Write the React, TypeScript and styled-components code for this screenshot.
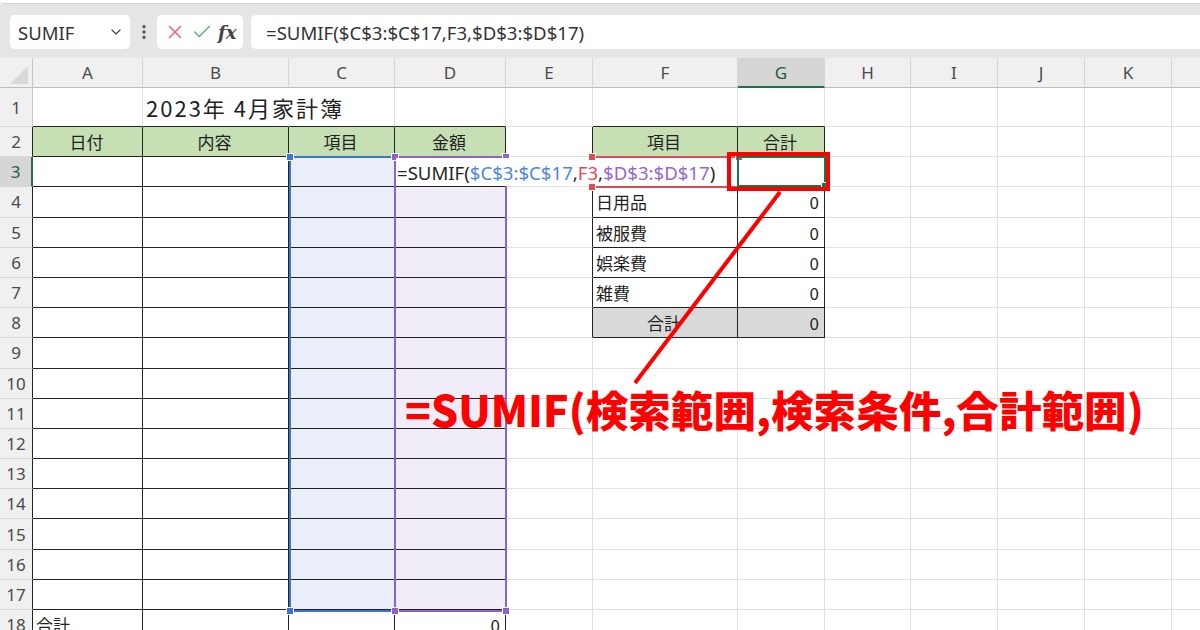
import React from 'react';
import styled, { createGlobalStyle } from 'styled-components';
import { ChevronDown, EllipsisVertical, X, Check } from 'lucide-react';

const GlobalStyle = createGlobalStyle`
  html, body { margin: 0; padding: 0; background: #ffffff; }
  body { font-family: "Noto Sans CJK JP", "Noto Sans", sans-serif; }
`;

const COL_NAMES = ['A', 'B', 'C', 'D', 'E', 'F', 'G', 'H', 'I', 'J', 'K', 'L'];
const COL_WIDTHS = [110, 146, 106, 111, 87, 145, 87, 86, 87, 87, 87, 87];
const ROWS = Array.from({ length: 18 }, (_, i) => i + 1);
const ROW_H = 30.2;

const GRID_LINE = '#e1e1e1';
const INK = '#222222';
const HEADER_GREEN = '#c6e0b4';
const EXCEL_GREEN = '#217346';
const BLUE = '#3f74d2';
const PURPLE = '#8d62c9';
const REF_RED = '#dc4d57';

// grid lines: 1 = row header column, 2 = A ...; 1 = header row, 2 = sheet row 1 ...
const colLine = (name: string) => COL_NAMES.indexOf(name) + 2;
const rowLine = (r: number) => r + 1;

type Align = 'left' | 'center' | 'right';

interface CellDef {
  text?: string;
  align?: Align;
  size?: number;
  spacing?: number;
  open?: boolean;
}

const cellDefs: Record<string, CellDef> = {
  B1: { text: '2023年 4月家計簿', size: 22, spacing: 2, open: true },
  A2: { text: '日付', align: 'center' },
  B2: { text: '内容', align: 'center' },
  C2: { text: '項目', align: 'center' },
  D2: { text: '金額', align: 'center' },
  F2: { text: '項目', align: 'center' },
  G2: { text: '合計', align: 'center' },
  F4: { text: '日用品' },
  G4: { text: '0', align: 'right' },
  F5: { text: '被服費' },
  G5: { text: '0', align: 'right' },
  F6: { text: '娯楽費' },
  G6: { text: '0', align: 'right' },
  F7: { text: '雑費' },
  G7: { text: '0', align: 'right' },
  F8: { text: '合計', align: 'center' },
  G8: { text: '0', align: 'right' },
  A18: { text: '合計' },
  D18: { text: '0', align: 'right' },
};

const inTable1 = (r: number, c: number) => r >= 2 && r <= 17 && c <= 3;
const inTable2 = (r: number, c: number) => r >= 2 && r <= 8 && (c === 5 || c === 6);

const darkRight = (r: number, c: number) =>
  inTable1(r, c) || inTable2(r, c) || (r >= 2 && r <= 8 && c === 4) || (r === 18 && c <= 3);

const darkBottom = (r: number, c: number) =>
  inTable1(r, c) || inTable2(r, c) || (r === 1 && (c <= 3 || c === 5 || c === 6));

const fillFor = (r: number, c: number) => {
  if (r === 2 && (c <= 3 || c === 5 || c === 6)) return HEADER_GREEN;
  if (r === 8 && (c === 5 || c === 6)) return '#d9d9d9';
  if (r >= 3 && r <= 17 && c === 2) return '#e9eef8';
  if (r >= 3 && r <= 17 && c === 3) return '#f0edf8';
  return 'transparent';
};

const Page = styled.div`
  width: 1200px;
  height: 630px;
  overflow: hidden;
  background: #ffffff;
`;

const TopStrip = styled.div`
  height: 3px;
  background: #ffffff;
  border-bottom: 1px solid #d3d3d3;
  border-bottom-left-radius: 6px;
`;

const FormulaBar = styled.div`
  box-sizing: border-box;
  height: 54px;
  padding: 11px 0 9px 10px;
  display: flex;
  align-items: stretch;
  background: #e6e6e6;
`;

const NameBox = styled.div`
  width: 120px;
  box-sizing: border-box;
  padding: 0 6px 0 8px;
  display: flex;
  align-items: center;
  justify-content: space-between;
  background: #ffffff;
  border-radius: 5px;
  font: 18.5px "Noto Sans", sans-serif;
  color: #333333;
`;

const Kebab = styled.div`
  width: 27px;
  display: flex;
  align-items: center;
  justify-content: center;
  color: #555555;
`;

const ActionBox = styled.div`
  width: 86px;
  display: flex;
  align-items: center;
  justify-content: space-around;
  padding: 0 4px;
  box-sizing: border-box;
  background: #ffffff;
  border-radius: 5px;
`;

const Fx = styled.span`
  font: italic bold 18px "DejaVu Serif", serif;
  color: #444444;
`;

const FormulaInput = styled.div`
  flex: 1;
  margin-left: 8px;
  padding-left: 15px;
  display: flex;
  align-items: center;
  background: #ffffff;
  border-radius: 5px 0 0 5px;
  font: 18.6px "Noto Sans", sans-serif;
  color: #333333;
`;

const Sheet = styled.div`
  position: relative;
  display: grid;
  grid-template-columns: 33px ${COL_WIDTHS.map((w) => `${w}px`).join(' ')};
  grid-template-rows: 30px 39px repeat(17, ${ROW_H}px);
`;

const Corner = styled.div`
  grid-column: 1;
  grid-row: 1;
  box-sizing: border-box;
  background: #f0f0f0;
  border-right: 1px solid #c6c6c6;
  border-bottom: 1px solid #bdbdbd;
`;

const ColHead = styled.div<{ $col: number; $active?: boolean }>`
  grid-column: ${(p) => p.$col};
  grid-row: 1;
  box-sizing: border-box;
  display: flex;
  align-items: center;
  justify-content: center;
  background: ${(p) => (p.$active ? '#d6d6d6' : '#f0f0f0')};
  color: ${(p) => (p.$active ? '#1d5f3a' : '#4a4a4a')};
  border-right: 1px solid #d6d6d6;
  border-bottom: ${(p) => (p.$active ? `2px solid ${EXCEL_GREEN}` : '1px solid #bdbdbd')};
  font: 17px "Noto Sans", sans-serif;
`;

const RowHead = styled.div<{ $row: number; $active?: boolean; $edge?: boolean }>`
  grid-column: 1;
  grid-row: ${(p) => p.$row};
  box-sizing: border-box;
  display: flex;
  align-items: center;
  justify-content: center;
  background: ${(p) => (p.$active ? '#d6d6d6' : '#f0f0f0')};
  color: ${(p) => (p.$active ? '#1d5f3a' : '#4a4a4a')};
  border-bottom: 1px solid #d8d8d8;
  border-right: ${(p) =>
    p.$active ? `2px solid ${EXCEL_GREEN}` : p.$edge ? `1px solid ${INK}` : '1px solid #c6c6c6'};
  font: 17px "Noto Sans", sans-serif;
`;

const Cell = styled.div<{
  $col: number;
  $row: number;
  $align: Align;
  $fill: string;
  $rDark: boolean;
  $bDark: boolean;
  $open?: boolean;
  $size?: number;
  $spacing?: number;
}>`
  grid-column: ${(p) => p.$col};
  grid-row: ${(p) => p.$row};
  box-sizing: border-box;
  display: flex;
  align-items: center;
  justify-content: ${(p) =>
    p.$align === 'center' ? 'center' : p.$align === 'right' ? 'flex-end' : 'flex-start'};
  padding: 0 5px 0 3px;
  background: ${(p) => p.$fill};
  border-right: 1px solid ${(p) => (p.$rDark ? INK : p.$open ? 'transparent' : GRID_LINE)};
  border-bottom: 1px solid ${(p) => (p.$bDark ? INK : GRID_LINE)};
  font-size: ${(p) => p.$size ?? 17}px;
  letter-spacing: ${(p) => p.$spacing ?? 0}px;
  color: #1f1f1f;
  white-space: nowrap;
  overflow: visible;
`;

// overlays sit on the same grid, spanning the cells they mark
const RangeBox = styled.div<{ $color: string; $cols: string; $rows: string; $edges?: boolean }>`
  grid-column: ${(p) => p.$cols};
  grid-row: ${(p) => p.$rows};
  position: relative;
  z-index: 2;
  box-sizing: border-box;
  margin: -1px -1px -2px ${(p) => (p.$edges ? '0' : '-1px')};
  border: 2px solid ${(p) => p.$color};
`;

const RefBox = styled.div`
  grid-column: ${colLine('F')};
  grid-row: ${rowLine(3)};
  position: relative;
  z-index: 4;
  margin: -1px 0 -1px 0;
  border-top: 2px solid ${REF_RED};
  border-bottom: 2px solid ${REF_RED};
`;

const Handle = styled.span<{ $color: string; $v: 'top' | 'bottom'; $h: 'left' | 'right' }>`
  position: absolute;
  ${(p) => p.$v}: -4px;
  ${(p) => p.$h}: -4px;
  width: 6px;
  height: 6px;
  background: ${(p) => p.$color};
  outline: 1px solid #ffffff;
`;

const EditText = styled.div`
  grid-column: ${colLine('D')} / ${colLine('G')};
  grid-row: ${rowLine(3)};
  z-index: 3;
  margin: 1px 11px 1px 1px;
  display: flex;
  align-items: center;
  padding-left: 1px;
  background: #ffffff;
  font: 18.6px "Noto Sans", sans-serif;
  color: #262626;
  white-space: nowrap;
`;

const Ref = styled.span<{ $color: string }>`
  color: ${(p) => p.$color};
`;

const ActiveCell = styled.div`
  grid-column: ${colLine('G')};
  grid-row: ${rowLine(3)};
  position: relative;
  z-index: 5;
  margin: -1px -1px 0 -1px;
  border: 2px solid ${EXCEL_GREEN};
`;

const FillHandle = styled.span`
  position: absolute;
  right: -5px;
  bottom: -5px;
  width: 6px;
  height: 6px;
  background: ${EXCEL_GREEN};
  border: 1px solid #ffffff;
`;

const Callout = styled.div`
  grid-column: ${colLine('G')};
  grid-row: ${rowLine(3)};
  z-index: 6;
  margin: -5.5px -5px -3.5px -11px;
  border: 4.5px solid #ff0000;
`;

const Pointer = styled.svg`
  position: absolute;
  left: 0;
  top: 0;
  z-index: 6;
  pointer-events: none;
`;

const Annotation = styled.div`
  grid-column: ${colLine('D')} / -1;
  grid-row: ${rowLine(11)} / span 2;
  z-index: 6;
  margin: -11px 0 0 10px;
  font-family: "Noto Sans CJK JP", sans-serif;
  font-weight: 900;
  font-size: 42.6px;
  line-height: 1;
  color: #ff0000;
  white-space: nowrap;
`;

const corners: Array<['top' | 'bottom', 'left' | 'right']> = [
  ['top', 'left'],
  ['top', 'right'],
  ['bottom', 'left'],
  ['bottom', 'right'],
];

export default function App() {
  return (
    <>
      <GlobalStyle />
      <Page>
        <TopStrip />
        <FormulaBar>
          <NameBox>
            SUMIF
            <ChevronDown size={16} color="#444" strokeWidth={1.8} />
          </NameBox>
          <Kebab>
            <EllipsisVertical size={18} strokeWidth={2.4} />
          </Kebab>
          <ActionBox>
            <X size={22} color="#e06a6a" strokeWidth={1.6} />
            <Check size={22} color="#5cb27a" strokeWidth={1.6} />
            <Fx>fx</Fx>
          </ActionBox>
          <FormulaInput>=SUMIF($C$3:$C$17,F3,$D$3:$D$17)</FormulaInput>
        </FormulaBar>

        <Sheet>
          <Corner>
            <svg width="32" height="29" viewBox="0 0 32 29">
              <polygon points="28,8 28,26 10,26" fill="#d9d9d9" />
            </svg>
          </Corner>
          {COL_NAMES.map((name) => (
            <ColHead key={name} $col={colLine(name)} $active={name === 'G'}>
              {name}
            </ColHead>
          ))}
          {ROWS.map((r) => (
            <React.Fragment key={r}>
              <RowHead $row={rowLine(r)} $active={r === 3} $edge={r >= 2}>
                {r}
              </RowHead>
              {COL_NAMES.map((name, c) => {
                const def = cellDefs[`${name}${r}`] ?? {};
                return (
                  <Cell
                    key={name}
                    $col={colLine(name)}
                    $row={rowLine(r)}
                    $align={def.align ?? 'left'}
                    $fill={fillFor(r, c)}
                    $rDark={darkRight(r, c)}
                    $bDark={darkBottom(r, c)}
                    $open={def.open}
                    $size={def.size}
                    $spacing={def.spacing}
                  >
                    {def.text}
                  </Cell>
                );
              })}
            </React.Fragment>
          ))}

          <RangeBox $color={BLUE} $cols={`${colLine('C')}`} $rows={`${rowLine(3)} / ${rowLine(18)}`} $edges>
            {corners.map(([v, h]) => (
              <Handle key={v + h} $color={BLUE} $v={v} $h={h} />
            ))}
          </RangeBox>
          <RangeBox $color={PURPLE} $cols={`${colLine('D')}`} $rows={`${rowLine(3)} / ${rowLine(18)}`}>
            {corners.map(([v, h]) => (
              <Handle key={v + h} $color={PURPLE} $v={v} $h={h} />
            ))}
          </RangeBox>

          <EditText>
            =SUMIF(<Ref $color="#4f86d8">$C$3:$C$17</Ref>,<Ref $color="#e04b55">F3</Ref>,
            <Ref $color="#9466cf">$D$3:$D$17</Ref>)
          </EditText>

          <RefBox>
            {corners.slice(0, 3).map(([v, h]) => (
              <Handle key={v + h} $color={REF_RED} $v={v} $h={h} />
            ))}
          </RefBox>

          <ActiveCell>
            <FillHandle />
          </ActiveCell>
          <Callout />
          <Pointer width="1200" height="572">
            <line x1="780" y1="134" x2="635" y2="325" stroke="#ff0000" strokeWidth="4" />
          </Pointer>
          <Annotation>=SUMIF(検索範囲,検索条件,合計範囲)</Annotation>
        </Sheet>
      </Page>
    </>
  );
}
